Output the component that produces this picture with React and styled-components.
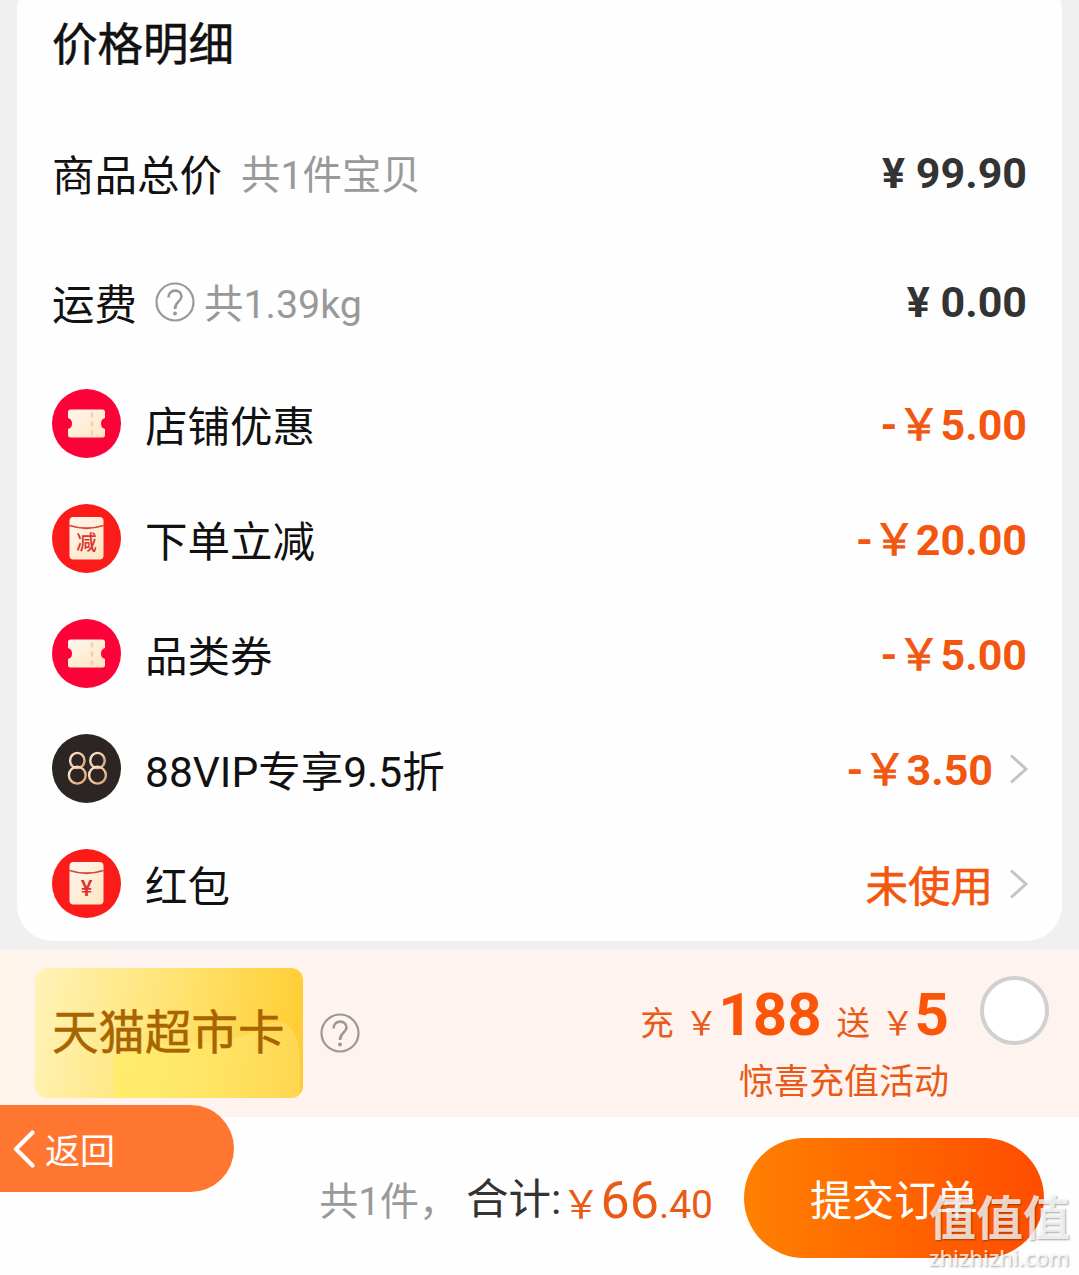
import React from "react";
import styled, { createGlobalStyle } from "styled-components";

const discounts = [
  { icon: "ticket", label: "店铺优惠", amount: "5.00" },
  { icon: "minus", label: "下单立减", amount: "20.00" },
  { icon: "ticket", label: "品类券", amount: "5.00" },
  { icon: "vip", label: "88VIP专享9.5折", amount: "3.50", link: true },
  { icon: "packet", label: "红包", note: "未使用", link: true },
];

const colors = { ticket: "#fb0239", minus: "#fb1c1a", packet: "#fb1c1a", vip: "#2c2523" };

const Ticket = () => (
  <>
    <path
      d="M18.500 20.500H50.500Q53 20.500 53 23V29Q49 30 49 34.500Q49 39 53 40V46Q53 48.500 50.500 48.500H18.500Q16 48.500 16 46V40Q20 39 20 34.500Q20 30 16 29V23Q16 20.500 18.500 20.500Z"
      fill="url(#cream)"
    />
    <path d="M40 23.500V47" stroke="#f3cdb9" strokeWidth="2.600" strokeDasharray="5 4" />
  </>
);

const Envelope = ({ sign, size }) => (
  <>
    <rect x="17.500" y="13" width="34" height="42.500" rx="4" fill="url(#cream)" />
    <path d="M17.500 21.500Q34.500 27 51.500 21.500" fill="none" stroke="#d9433a" strokeWidth="1.800" />
    <IconText x="34.500" y={sign === "¥" ? 46.5 : 45.5} fontSize={size}>
      {sign}
    </IconText>
  </>
);

const RowIcon = ({ type }) => (
  <svg width="69" height="69" viewBox="0 0 69 69">
    <defs>
      <linearGradient id="cream" x1="0" y1="0" x2="1" y2="1">
        <stop offset="0" stopColor="#fff6f0" />
        <stop offset="1" stopColor="#fde5c0" />
      </linearGradient>
      <linearGradient id="gold" x1="0" y1="0" x2="1" y2="1">
        <stop offset="0" stopColor="#ffeed8" />
        <stop offset="1" stopColor="#d9a06e" />
      </linearGradient>
    </defs>
    <circle cx="34.500" cy="34.500" r="34.500" fill={colors[type]} />
    {type === "ticket" && <Ticket />}
    {type === "minus" && <Envelope sign="减" size="20.500" />}
    {type === "packet" && <Envelope sign="¥" size="22" />}
    {type === "vip" && (
      <g fill="none" stroke="url(#gold)" strokeWidth="2.400">
        <ellipse cx="25.300" cy="26.500" rx="7.200" ry="7.600" />
        <ellipse cx="25.300" cy="41.200" rx="8.400" ry="8.400" />
        <ellipse cx="45.500" cy="26.500" rx="7.200" ry="7.600" />
        <ellipse cx="45.500" cy="41.200" rx="8.400" ry="8.400" />
      </g>
    )}
  </svg>
);

const Help = () => (
  <svg width="40" height="40" viewBox="0 0 40 40" fill="none" stroke="#999" strokeWidth="2.200">
    <circle cx="20" cy="20" r="18.500" />
    <path d="M13.500 15.500C13.500 6.500 26.500 6.500 26.500 14.500C26.500 19.500 20 19.500 20 27" strokeWidth="2.600" />
    <circle cx="20" cy="31.500" r="2" fill="#999" stroke="none" />
  </svg>
);

const Chevron = () => (
  <svg width="20" height="30" viewBox="0 0 20 30" fill="none" stroke="#c4c4c4" strokeWidth="3">
    <path d="M2 1.500L17 15L2 28.500" />
  </svg>
);

const Swoosh = () => (
  <svg width="268" height="130" viewBox="0 0 268 130">
    <defs>
      <linearGradient id="shine" x1="0" y1="0" x2="1" y2="0">
        <stop offset="0" stopColor="#fff04f" stopOpacity="0.500" />
        <stop offset="0.600" stopColor="#fff37a" stopOpacity="0.350" />
        <stop offset="1" stopColor="#ffe98a" stopOpacity="0.350" />
      </linearGradient>
    </defs>
    <path d="M79 130V88Q120 74 172 74Q205 74 228 58Q262 42 265 92V130Z" fill="url(#shine)" />
  </svg>
);

const App = () => {
  return (
    <Page>
      <GlobalStyle />
      <Card>
        <Title>价格明细</Title>
        <Row>
          <Label>商品总价</Label>
          <Hint $gap="19px">共1件宝贝</Hint>
          <Price>¥ 99.90</Price>
        </Row>
        <Row>
          <Label>运费</Label>
          <HelpWrap>
            <Help />
          </HelpWrap>
          <Hint $gap="9px">共1.39kg</Hint>
          <Price>¥ 0.00</Price>
        </Row>
        {discounts.map((item, i) => (
          <DiscountRow key={i}>
            <RowIcon type={item.icon} />
            <Label $gap="24px">{item.label}</Label>
            {item.note ? (
              <Unused>{item.note}</Unused>
            ) : (
              <Price $hot>
                -<Yen>￥</Yen>
                {item.amount}
              </Price>
            )}
            {item.link && (
              <ChevronWrap>
                <Chevron />
              </ChevronWrap>
            )}
          </DiscountRow>
        ))}
      </Card>

      <Recharge>
        <GiftCard>
          <Swoosh />
          <span>天猫超市卡</span>
        </GiftCard>
        <Help />
        <Offer>
          <OfferLine>
            <Small>充</Small>
            <Small $gap="11px">￥</Small>
            <Big>188</Big>
            <Small $gap="15px">送</Small>
            <Small $gap="11px">￥</Small>
            <Big>5</Big>
          </OfferLine>
          <OfferNote>惊喜充值活动</OfferNote>
        </Offer>
        <Radio />
      </Recharge>

      <Footer>
        <Count>共1件，</Count>
        <Total>
          合计:<Sum><small>￥</small>66<small>.40</small></Sum>
        </Total>
        <Submit type="button">提交订单</Submit>
      </Footer>

      <Back type="button">
        <svg width="22" height="38" viewBox="0 0 22 38" fill="none" stroke="#fff" strokeWidth="4.200">
          <path d="M19.500 2.500L3 19L19.500 35.500" strokeLinecap="round" strokeLinejoin="round" />
        </svg>
        返回
      </Back>

      <Watermark>
        <b>值值值</b>
        <span>zhizhizhi.com</span>
      </Watermark>
    </Page>
  );
};

const GlobalStyle = createGlobalStyle`
  * {
    box-sizing: border-box;
  }
  body {
    margin: 0;
    overflow: hidden;
    background: #f0f0f0;
    font-family: Roboto, "Noto Sans CJK SC", sans-serif;
  }
  button {
    border: none;
    font-family: inherit;
    color: white;
  }
  svg {
    display: block;
    flex-shrink: 0;
  }
`;

const Page = styled.div`
  position: relative;
  width: 1079px;
  height: 1275px;
  overflow: hidden;
  display: flex;
  flex-direction: column;
  white-space: nowrap;
`;

const Card = styled.section`
  flex-shrink: 0;
  height: 967px;
  margin: -26px 17px 9px;
  padding: 26px 35px 0;
  border-radius: 36px;
  background: #fefefe;
`;

const Title = styled.h2`
  height: 109px;
  margin: 0;
  font-size: 45.5px;
  font-weight: 400;
  -webkit-text-stroke: 0.5px #111;
  line-height: 91px;
  color: #111;
`;

const Row = styled.div`
  display: flex;
  align-items: center;
  height: 129px;
`;

const DiscountRow = styled(Row)`
  height: 115px;
  svg:first-child {
    margin-top: -3px;
  }
`;

const Label = styled.span`
  margin-left: ${(props) => props.$gap || 0};
  padding-bottom: 3px;
  font-size: 42.5px;
  color: #111;
`;

const Hint = styled.span`
  margin-left: ${(props) => props.$gap};
  padding-bottom: 5px;
  font-size: 39.4px;
  color: #999;
`;

const HelpWrap = styled.div`
  margin: -2px 0 0 18px;
`;

const Price = styled.span`
  margin-left: auto;
  padding-bottom: ${(props) => (props.$hot ? "7px" : "1px")};
  font-size: 43px;
  font-weight: 700;
  color: ${(props) => (props.$hot ? "#f2560f" : "#333")};
`;

const Yen = styled.span`
  font-weight: 400;
  -webkit-text-stroke: 1px #f2560f;
`;

const Unused = styled.span`
  margin-left: auto;
  padding-bottom: 3px;
  font-size: 42.5px;
  -webkit-text-stroke: 0.6px #f2560f;
  color: #f2560f;
`;

const ChevronWrap = styled.div`
  margin: 1px -2px 0 16px;
`;

const IconText = styled.text`
  text-anchor: middle;
  font-weight: 500;
  fill: #de312b;
`;

const Recharge = styled.section`
  display: flex;
  flex-shrink: 0;
  align-items: center;
  height: 167px;
  padding: 0 30px 2px 35px;
  background: linear-gradient(90deg, #fff4ea, #fff3ef 12%);
`;

const GiftCard = styled.div`
  display: grid;
  align-items: center;
  width: 268px;
  height: 130px;
  margin-right: 17px;
  overflow: hidden;
  border-radius: 12px;
  background: linear-gradient(100deg, #fff3b8, #ffe16a 55%, #ffcb2e);
  font-size: 46.5px;
  -webkit-text-stroke: 0.5px #a86400;
  color: #a86400;
  > * {
    grid-area: 1 / 1;
  }
  span {
    padding-left: 17px;
    line-height: 130px;
  }
`;

const Offer = styled.div`
  display: flex;
  flex-direction: column;
  align-items: flex-end;
  margin-left: auto;
  padding-top: 27px;
  color: #e95a16;
`;

const OfferLine = styled.div`
  display: flex;
  align-items: baseline;
  height: 74px;
  line-height: 72px;
`;

const Small = styled.span`
  margin-left: ${(props) => props.$gap || 0};
  font-size: 33.5px;
`;

const Big = styled.strong`
  font-size: 60px;
  font-weight: 700;
  color: #fa5508;
`;

const OfferNote = styled.div`
  font-size: 35px;
  line-height: 60px;
`;

const Radio = styled.div`
  width: 69px;
  height: 69px;
  margin: -44px 0 0 31px;
  border: 4px solid #d0d0d0;
  border-radius: 50%;
  background: white;
`;

const Footer = styled.footer`
  display: flex;
  flex: 1;
  align-items: center;
  justify-content: flex-end;
  padding: 4px 35px 0 0;
  background: #fefefe;
`;

const Count = styled.span`
  font-size: 39px;
  color: #999;
`;

const Total = styled.span`
  margin-left: 8px;
  font-size: 42.5px;
  color: #333;
`;

const Sum = styled.span`
  font-size: 52px;
  vertical-align: -4px;
  color: #ea5a15;
  small {
    font-size: 39px;
  }
`;

const Submit = styled.button`
  width: 300px;
  height: 120px;
  margin-left: 31px;
  padding-bottom: 3px;
  border-radius: 60px;
  background: linear-gradient(90deg, #ff8000, #ff4c00);
  font-size: 42px;
`;

const Back = styled.button`
  position: absolute;
  left: 0;
  top: 1105px;
  display: flex;
  align-items: center;
  gap: 10px;
  width: 234px;
  height: 87px;
  padding: 0 0 0 13px;
  border-radius: 0 44px 44px 0;
  background: #ff7631;
  font-size: 35px;
`;

const Watermark = styled.div`
  position: absolute;
  left: 929px;
  top: 1192px;
  display: flex;
  flex-direction: column;
  color: rgba(255, 255, 255, 0.8);
  text-shadow: 1px 1px 2px rgba(0, 0, 0, 0.35);
  b {
    font-size: 47px;
    line-height: 54px;
  }
  span {
    font-family: "Noto Sans", sans-serif;
    font-size: 21.8px;
    font-weight: 500;
    line-height: 24px;
  }
`;

export default App;
